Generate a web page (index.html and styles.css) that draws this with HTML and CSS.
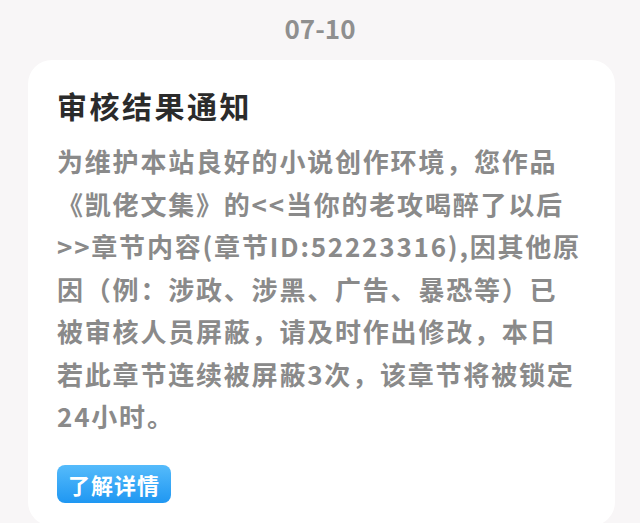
FILE: index.html
```html
<!DOCTYPE html>
<html lang="zh-CN">
<head>
  <meta charset="UTF-8" />
  <meta name="viewport" content="width=device-width, initial-scale=1" />
  <title>审核结果通知</title>
  <link rel="stylesheet" href="styles.css">
</head>
<body>

  <div class="page">
    <div class="msg-date">07-10</div>

    <article class="msg-card">
      <h1 class="msg-title">审核结果通知</h1>
      <p class="msg-body">
        为维护本站良好的小说创作环境，您作品<br>
        《凯佬文集》的&lt;&lt;当你的老攻喝醉了以后<br>
        &gt;&gt;章节内容(章节ID:52223316),因其他原<br>
        因（例：涉政、涉黑、广告、暴恐等）已<br>
        被审核人员屏蔽，请及时作出修改，本日<br>
        若此章节连续被屏蔽3次，该章节将被锁定<br>
        24小时。
      </p>
      <button class="msg-btn" type="button">了解详情</button>
    </article>
  </div>

</body>
</html>
```

FILE: styles.css
```css
* {
  box-sizing: border-box;
  margin: 0;
  padding: 0;
}

html, body {
  height: 100%;
  overflow: hidden;
}

body {
  font-family: "Noto Sans CJK SC", "Noto Sans", sans-serif;
  background: #f8f6f7;
  color: #333;
}

.page {
  display: flex;
  flex-direction: column;
}

.msg-date {
  text-align: center;
  font-size: 26px;
  font-weight: 700;
  color: #8f8f8f;
  line-height: 56px;
  margin-bottom: 4px;
}

.msg-card {
  margin: 0 25px 0 28px;
  background: #fff;
  border-radius: 24px;
  padding: 25px 20px 0 29px;
  min-height: 466px;
}

.msg-title {
  font-size: 30px;
  font-weight: 700;
  letter-spacing: 2.5px;
  line-height: 40px;
  color: #2b2b2b;
  margin-bottom: 15px;
}

.msg-body {
  font-size: 26px;
  font-weight: 700;
  letter-spacing: 1.8px;
  line-height: 42.5px;
  color: #8a8a8a;
  white-space: nowrap;
}

.msg-btn {
  margin-top: 27px;
  display: inline-flex;
  align-items: center;
  height: 38px;
  padding: 0 11px 0 11px;
  border: none;
  border-radius: 8px;
  background: linear-gradient(180deg, #55bbfb, #1f97f2);
  color: #fff;
  font-family: inherit;
  font-size: 22px;
  font-weight: 700;
  letter-spacing: 1px;
}
```
